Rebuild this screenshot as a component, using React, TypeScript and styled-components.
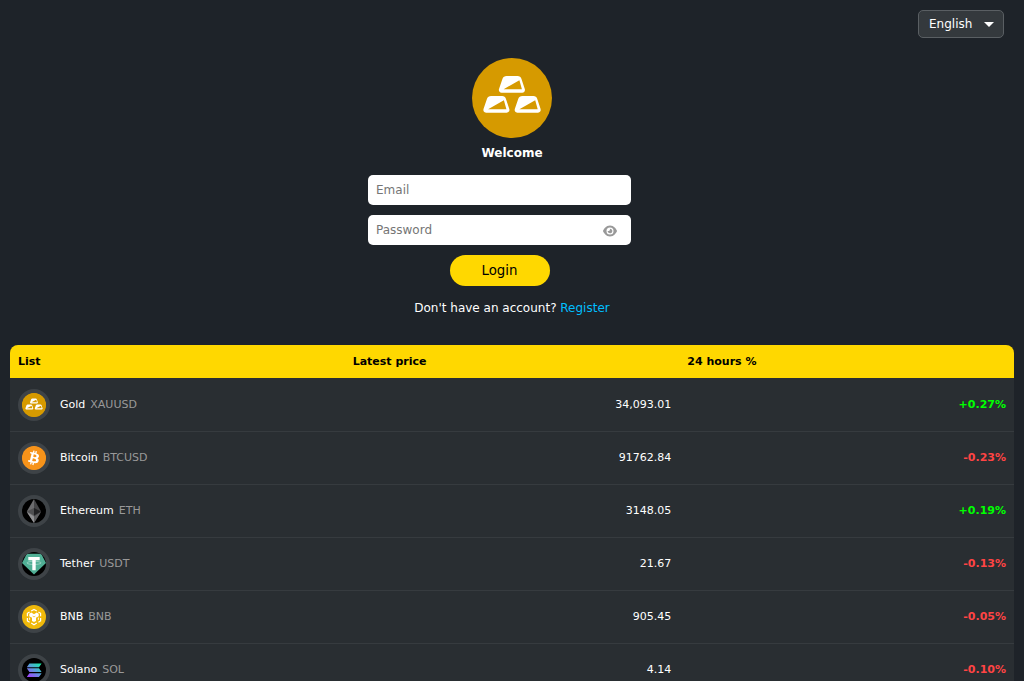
import React, { useState } from "react";
import styled, { createGlobalStyle } from "styled-components";
import { FaBitcoin } from "react-icons/fa";
import { FaEye } from "react-icons/fa6";

const GlobalStyle = createGlobalStyle`
  *, *::before, *::after { box-sizing: border-box; }
  body {
    margin: 0;
    background: #1e2329;
    color: #fff;
    font-family: "DejaVu Sans", Verdana, sans-serif;
    font-size: 12px;
    line-height: 14px;
  }
  input, select { font: inherit; }
  button { font-family: inherit; }
`;

const Page = styled.div`
  padding: 10px;
`;

const TopBar = styled.header`
  display: flex;
  justify-content: flex-end;
  padding-right: 10px;
`;

const SelectWrap = styled.div`
  display: grid;
  align-items: center;
  width: 86px;
  > * { grid-area: 1 / 1; }
`;

const LanguageSelect = styled.select`
  appearance: none;
  width: 100%;
  height: 28px;
  padding: 0 24px 0 10px;
  color: #fff;
  background: #34393d;
  border: 1px solid #5a5f63;
  border-radius: 5px;
`;

const Caret = styled.svg`
  justify-self: end;
  margin-right: 10px;
  pointer-events: none;
`;

const Auth = styled.main`
  display: flex;
  flex-direction: column;
  align-items: center;
  padding-top: 20px;
`;

const Title = styled.h1`
  margin: 8px 0 15px;
  font-size: 12px;
  line-height: 14px;
  font-weight: 700;
`;

const LoginForm = styled.form`
  display: flex;
  flex-direction: column;
  align-items: center;
  gap: 10px;
  width: 288px;
  max-width: 100%;
  padding-right: 25px;
`;

const Field = styled.div`
  display: flex;
  align-items: center;
  width: 100%;
  height: 30px;
  background: #fff;
  border-radius: 5px;
`;

const TextInput = styled.input`
  flex: 1;
  min-width: 0;
  height: 100%;
  padding: 0 8px;
  color: #222;
  background: transparent;
  border: 0;
  border-radius: 5px;
  &::placeholder { color: #757575; }
`;

const EyeButton = styled.button`
  display: flex;
  margin-right: 14px;
  padding: 1px 0 0;
  color: #999;
  background: none;
  border: 0;
  cursor: pointer;
`;

const LoginButton = styled.button`
  width: 100px;
  height: 31px;
  padding: 0;
  color: #000;
  background: #ffd800;
  border: 0;
  border-radius: 16px;
  cursor: pointer;
`;

const Hint = styled.p`
  margin: 15px 0 30px;
`;

const RegisterLink = styled.a`
  color: #00bfff;
  text-decoration: none;
`;

const PriceTable = styled.table`
  width: 100%;
  table-layout: fixed;
  border-collapse: separate;
  border-spacing: 0;
  overflow: hidden;
  font-size: 11px;
  line-height: 13px;
  background: #292e32;
  border-radius: 8px;
`;

const HeadCell = styled.th`
  padding: 10px 8px;
  color: #000;
  text-align: left;
  background: #ffd800;
`;

const Cell = styled.td`
  padding: 10px 8px;
  border-top: 1px solid #363b3f;
  tr:first-child > & { border-top-color: transparent; }
`;

const NumberCell = styled(Cell)`
  padding-bottom: 12px;
  text-align: right;
`;

const Change = styled.strong<{ $up: boolean }>`
  color: ${({ $up }) => ($up ? "#00ff00" : "#ff4444")};
`;

const Asset = styled.div`
  display: flex;
  align-items: center;
  gap: 10px;
`;

const IconRing = styled.span`
  display: flex;
  flex: none;
  padding: 4px;
  background: #3e4347;
  border-radius: 50%;
`;

const IconDisc = styled.span<{ $bg: string }>`
  display: flex;
  width: 24px;
  height: 24px;
  overflow: hidden;
  background: ${({ $bg }) => $bg};
  border-radius: 50%;
`;

const AssetName = styled.span`
  display: flex;
  gap: 5px;
  padding-bottom: 2px;
`;

const Ticker = styled.span`
  color: #999;
`;

const barPath =
  "M34.6 18h11c2 0 3.2.9 3.8 2.7l3.4 10.4c.6 2-.7 3.6-2.6 3.6H29.6c-2.1 0-3.2-1.7-2.6-3.6l3.5-10.4c.7-1.8 2-2.7 4.1-2.7zM31.6 31.2h18.3l-2.5-8.9z";

const GoldLogo = ({ size }: { size: number }) => (
  <svg width={size} height={size} viewBox="0 0 80 80" aria-hidden="true">
    <circle cx="40" cy="40" r="40" fill="#d69a00" />
    <g fill="#fff" fillRule="evenodd">
      <path d={barPath} />
      <path d={barPath} transform="translate(-15.5 20)" />
      <path d={barPath} transform="translate(15.8 20)" />
    </g>
  </svg>
);

const EthereumIcon = () => (
  <svg width="24" height="24" viewBox="0 0 24 24" aria-hidden="true">
    <path d="M12 0 4.8 12.4 12 24z" fill="#6c6c6e" />
    <path d="M12 0v24l7-11.6z" fill="#454547" />
    <path d="M4.8 12.4 12 9v7.6z" fill="#505052" />
    <path d="M19 12.4 12 9v7.6z" fill="#222224" />
    <path d="M4.8 13 12 24v-6.6z" fill="#929294" />
    <path d="M19 13 12 24v-6.6z" fill="#606062" />
  </svg>
);

const TetherIcon = () => (
  <svg width="24" height="24" viewBox="0 0 24 24" aria-hidden="true">
    <path d="M4.8 1.8h14.4L24 11 12 22.6 0 11z" fill="#50af95" />
    <path d="M6.3 5h11.4v3.3h-4v10h-3.4v-10h-4z" fill="#fff" />
    <ellipse cx="12" cy="10.9" rx="7" ry="1.6" fill="none" stroke="#fff" strokeOpacity=".55" strokeWidth=".7" />
  </svg>
);

const BnbIcon = () => (
  <svg width="24" height="24" viewBox="0 0 24 24" aria-hidden="true">
    <g fill="none" stroke="#fff" strokeWidth="1.2">
      <path d="M9.2 6.1 12 4.5l2.8 1.6M16.4 7l2.2 1.3v2.9M18.6 13v2.9l-2.2 1.3M14.8 18.1 12 19.7l-2.8-1.6M7.6 17.2l-2.2-1.3V13M5.4 11.2V8.3L7.6 7" />
    </g>
    <path d="m7.3 8.8 2-1.2L12 9.2l2.7-1.6 2 1.2v2.5L14 12.8v3.1l-2 1.2-2-1.2v-3.1l-2.7-1.5z" fill="#fff" />
    <path d="M7.6 12.6v2.2M16.4 12.6v2.2" stroke="#fff" strokeWidth=".9" />
    <path d="m10.6 11.1 1.4.8 1.4-.8" fill="none" stroke="#f0b90b" strokeWidth=".7" />
  </svg>
);

const SolanaIcon = () => (
  <svg width="24" height="24" viewBox="0 0 24 24" aria-hidden="true">
    <defs>
      <linearGradient id="solana" gradientUnits="userSpaceOnUse" x1="18" y1="5" x2="7" y2="19">
        <stop offset="0" stopColor="#14f1a5" />
        <stop offset=".5" stopColor="#5c9bdc" />
        <stop offset="1" stopColor="#a045ff" />
      </linearGradient>
    </defs>
    <path
      d="M7.4 5.4h12.2l-2.6 3.8H4.8zM4.8 10.3H17l2.6 3.8H7.4zM7.4 15.2h12.2L17 19H4.8z"
      fill="url(#solana)"
    />
  </svg>
);

const bitcoinDisc = "radial-gradient(circle, #fff 9px, #f7931a 10px)";

const assets = [
  { name: "Gold", ticker: "XAUUSD", price: "34,093.01", change: "+0.27%", bg: "#d69a00", icon: <GoldLogo size={24} /> },
  { name: "Bitcoin", ticker: "BTCUSD", price: "91762.84", change: "-0.23%", bg: bitcoinDisc, icon: <FaBitcoin size={24} color="#f7931a" /> },
  { name: "Ethereum", ticker: "ETH", price: "3148.05", change: "+0.19%", bg: "#000", icon: <EthereumIcon /> },
  { name: "Tether", ticker: "USDT", price: "21.67", change: "-0.13%", bg: "#000", icon: <TetherIcon /> },
  { name: "BNB", ticker: "BNB", price: "905.45", change: "-0.05%", bg: "#f0b90b", icon: <BnbIcon /> },
  { name: "Solano", ticker: "SOL", price: "4.14", change: "-0.10%", bg: "#000", icon: <SolanaIcon /> },
];

export default function App() {
  const [visible, setVisible] = useState(false);

  return (
    <Page>
      <GlobalStyle />
      <TopBar>
        <SelectWrap>
          <LanguageSelect aria-label="Language">
            <option>English</option>
          </LanguageSelect>
          <Caret width="10" height="5" viewBox="0 0 10 5" aria-hidden="true">
            <path d="M0 0h10L5 5z" fill="#fff" />
          </Caret>
        </SelectWrap>
      </TopBar>
      <Auth>
        <GoldLogo size={80} />
        <Title>Welcome</Title>
        <LoginForm onSubmit={(e) => e.preventDefault()}>
          <Field>
            <TextInput type="email" placeholder="Email" aria-label="Email" />
          </Field>
          <Field>
            <TextInput type={visible ? "text" : "password"} placeholder="Password" aria-label="Password" />
            <EyeButton type="button" aria-label="Show password" onClick={() => setVisible(!visible)}>
              <FaEye size={14} />
            </EyeButton>
          </Field>
          <LoginButton type="submit">Login</LoginButton>
        </LoginForm>
        <Hint>
          Don't have an account? <RegisterLink href="#register">Register</RegisterLink>
        </Hint>
      </Auth>
      <PriceTable>
        <thead>
          <tr>
            <HeadCell scope="col">List</HeadCell>
            <HeadCell scope="col">Latest price</HeadCell>
            <HeadCell scope="col">24 hours %</HeadCell>
          </tr>
        </thead>
        <tbody>
          {assets.map((a) => (
            <tr key={a.name}>
              <Cell>
                <Asset>
                  <IconRing>
                    <IconDisc $bg={a.bg}>{a.icon}</IconDisc>
                  </IconRing>
                  <AssetName>
                    {a.name}
                    <Ticker>{a.ticker}</Ticker>
                  </AssetName>
                </Asset>
              </Cell>
              <NumberCell>{a.price}</NumberCell>
              <NumberCell>
                <Change $up={a.change.startsWith("+")}>{a.change}</Change>
              </NumberCell>
            </tr>
          ))}
        </tbody>
      </PriceTable>
    </Page>
  );
}
